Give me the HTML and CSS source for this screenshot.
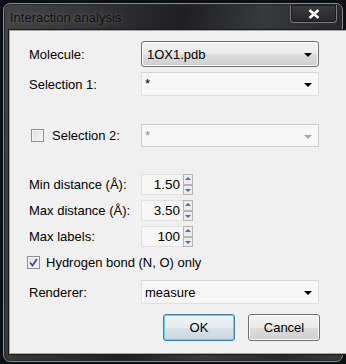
FILE: index.html
```html
<!DOCTYPE html>
<html lang="en">
<head>
    <meta charset="UTF-8">
    <title>Interaction analysis</title>
    <link rel="stylesheet" href="styles.css">
</head>
<body>

<div class="window">
    <div class="titlebar">
        <span class="title">Interaction analysis</span>
        <button class="close" type="button">
            <svg width="12" height="10" viewBox="0 0 12 10"><path d="M1.5 1 L10.5 9 M10.5 1 L1.5 9" stroke="#fff" stroke-width="2.6"/></svg>
        </button>
    </div>

    <div class="client">
        <!-- molecule / selections -->
        <div class="row row-mol">
            <label class="lbl">Molecule:</label>
            <div class="combo combo-btn"><span>1OX1.pdb</span><i class="arrow"></i></div>
        </div>
        <div class="row row-sel1">
            <label class="lbl">Selection 1:</label>
            <div class="combo combo-edit"><span class="star">*</span><i class="arrow"></i></div>
        </div>
        <div class="row row-sel2">
            <label class="lbl check-lbl"><span class="check"></span>Selection 2:</label>
            <div class="combo combo-edit disabled"><span class="star">*</span><i class="arrow"></i></div>
        </div>

        <!-- distances -->
        <div class="row row-spin first">
            <label class="lbl">Min distance (&Aring;):</label>
            <div class="spin"><span class="val">1.50</span><span class="btns"><b class="up"></b><b class="down"></b></span></div>
        </div>
        <div class="row row-spin">
            <label class="lbl">Max distance (&Aring;):</label>
            <div class="spin"><span class="val">3.50</span><span class="btns"><b class="up"></b><b class="down"></b></span></div>
        </div>
        <div class="row row-spin">
            <label class="lbl">Max labels:</label>
            <div class="spin"><span class="val">100</span><span class="btns"><b class="up"></b><b class="down"></b></span></div>
        </div>

        <div class="hbond">
            <span class="check checked">
                <svg width="9" height="9" viewBox="0 0 9 9"><path d="M1 4.5 L3.5 7.5 L8 1" fill="none" stroke="#3d4f9a" stroke-width="1.8"/></svg>
            </span>
            Hydrogen bond (N, O) only
        </div>

        <div class="row row-rend">
            <label class="lbl">Renderer:</label>
            <div class="combo combo-edit"><span>measure</span><i class="arrow"></i></div>
        </div>

        <div class="buttons">
            <button class="btn default" type="button">OK</button>
            <button class="btn" type="button">Cancel</button>
        </div>
    </div>
</div>

</body>
</html>
```

FILE: styles.css
```css
body {
    margin: 0;
    width: 346px;
    height: 364px;
    background: #0d0f14;
    font-family: "Liberation Sans", Arial, sans-serif;
    font-size: 13px;
    color: #000;
    overflow: hidden;
}
.window {
    margin: 3px 0 0 3px;
    width: 338px;
    height: 357px;
    border: 1px solid #8a8a8a;
    border-radius: 7px;
    background: linear-gradient(100deg, #444446 0%, #363638 20%, #1f1f21 45%, #37393c 65%, #28282a 85%, #3a3a3c 100%);
    box-shadow: inset 0 0 0 1px #2a2a2a;
}
.titlebar {
    height: 26px;
    display: flex;
    align-items: flex-start;
    justify-content: space-between;
}
.title {
    margin: 6px 0 0 6px;
    color: #111;
    text-shadow: 0 0 6px rgba(200, 200, 200, 0.45);
}
.close {
    width: 47px;
    height: 18px;
    margin: 1px 5px 0 0;
    padding: 0;
    border: 1px solid #7a7a7a;
    border-top: none;
    border-radius: 0 0 4px 4px;
    background: linear-gradient(#3c3c3e, #262628);
    box-shadow: inset 0 0 0 1px #1c1c1c;
    display: flex;
    align-items: center;
    justify-content: center;
}
.client {
    margin: 0 0 0 5px;
    width: 326px;
    height: 322px;
    border: 1px solid #a8a8a8;
    box-shadow: 0 0 0 1px #1a1a1a;
    background: #f0f0f0;
    padding: 0 0 0 19px;
    box-sizing: content-box;
}
.row {
    display: flex;
    align-items: center;
}
.lbl {
    width: 112px;
    flex: none;
}
.row-mol {
    padding-top: 10px;
}
.row-sel1 {
    margin-top: 5px;
}
.row-sel2 {
    margin-top: 28px;
}
.row-spin.first {
    margin-top: 27px;
}
.row-spin {
    margin-top: 5px;
}
.combo {
    width: 178px;
    box-sizing: border-box;
    display: flex;
    align-items: center;
    justify-content: space-between;
    padding: 0 6px 0 5px;
}
.combo-btn {
    height: 26px;
    border: 1px solid #707070;
    border-radius: 3px;
    background: linear-gradient(#f2f2f2 0%, #ebebeb 50%, #dddddd 51%, #cfcfcf 100%);
    box-shadow: inset 0 0 0 1px #fbfbfb;
}
.combo-edit {
    height: 24px;
    border: 1px solid #e0e0e0;
    border-top-color: #d6d6d6;
    background: #f7f7f7;
    padding-left: 3px;
}
.combo-edit.disabled {
    height: 23px;
    border-color: #cfcfcf;
    color: #8a8a8a;
}
.star {
    align-self: flex-start;
    margin-top: 3px;
}
.arrow {
    width: 0;
    height: 0;
    border-left: 4px solid transparent;
    border-right: 4px solid transparent;
    border-top: 4px solid #000;
    margin-top: 2px;
}
.disabled .arrow {
    border-top-color: #a6a6a6;
}
.check-lbl {
    display: flex;
    align-items: center;
    gap: 8px;
    margin-left: 2px;
    width: 110px;
}
.check {
    width: 11px;
    height: 11px;
    border: 1px solid #8f8f8f;
    background: linear-gradient(135deg, #dcdcdc, #fafafa);
    box-shadow: inset 0 0 0 1px #f4f4f4;
    display: inline-flex;
    align-items: center;
    justify-content: center;
}
.spin {
    display: flex;
    height: 21px;
}
.val {
    width: 42px;
    box-sizing: border-box;
    border: 1px solid #e0e0e0;
    border-right: none;
    background: #f6f6f6;
    text-align: right;
    padding-right: 3px;
    line-height: 20px;
    font-size: 13.5px;
}
.btns {
    width: 10px;
    display: flex;
    flex-direction: column;
}
.btns b {
    flex: 1;
    border: 1px solid #b5b5b5;
    background: #ececec;
    position: relative;
}
.btns b::after {
    content: "";
    position: absolute;
    left: 1px;
    border-left: 3px solid transparent;
    border-right: 3px solid transparent;
}
.btns .up::after {
    top: 2px;
    border-bottom: 3px solid #5a6aa8;
}
.btns .down::after {
    top: 3px;
    border-top: 3px solid #5a6aa8;
}
.hbond {
    display: flex;
    align-items: center;
    gap: 6px;
    margin: 8px 0 0 -2px;
    height: 14px;
}
.row-rend {
    margin-top: 11px;
}
.buttons {
    display: flex;
    gap: 13px;
    margin: 10px 0 0 134px;
}
.btn {
    width: 72px;
    height: 27px;
    font-family: inherit;
    font-size: 13px;
    border: 1px solid #707070;
    border-radius: 3px;
    background: linear-gradient(#f2f2f2 0%, #ebebeb 50%, #dddddd 51%, #cfcfcf 100%);
    box-shadow: inset 0 0 0 1px #fbfbfb;
    padding: 0;
}
.btn.default {
    border-color: #3c7fb1;
    background: linear-gradient(#eef3f6 0%, #e6edf1 50%, #d8e2e8 51%, #cbd7de 100%);
    box-shadow: inset 0 0 0 1px #6fd0f2;
}
```
